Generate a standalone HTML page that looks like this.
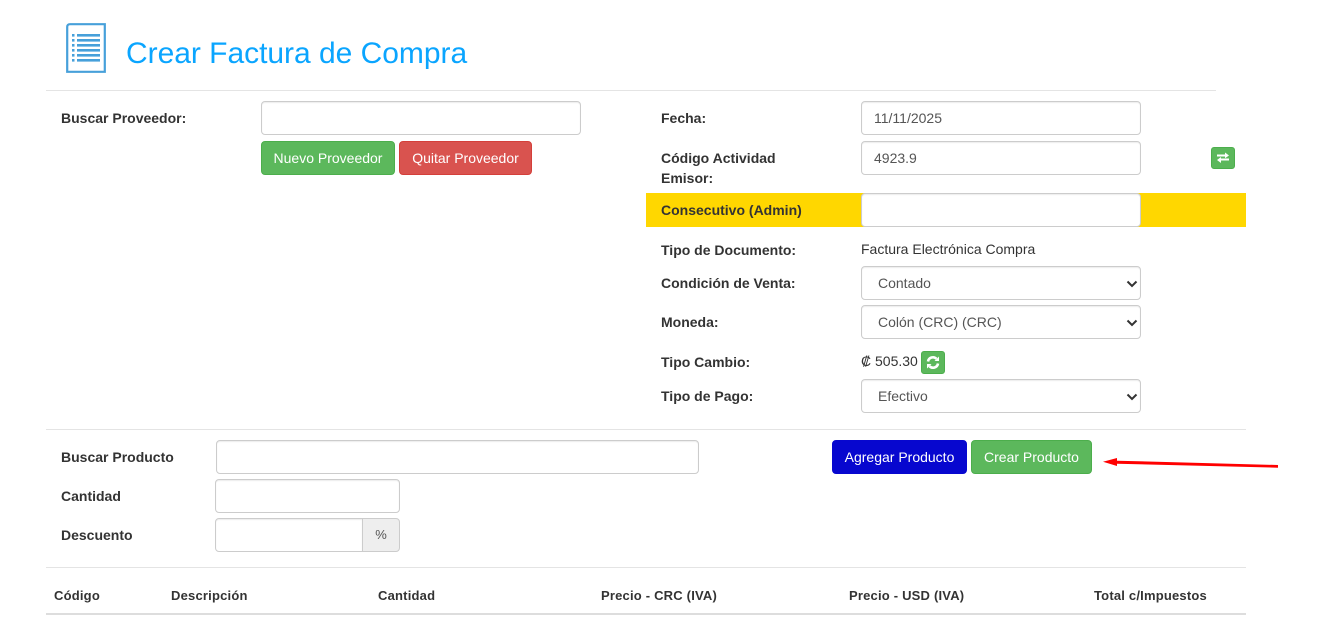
<!DOCTYPE html>
<html lang="es">
<head>
<meta charset="utf-8">
<title>Crear Factura de Compra</title>
<style>
html,body{margin:0;padding:0;background:#fff;}
body{width:1317px;height:644px;position:relative;overflow:hidden;font-family:"Liberation Sans",Arial,sans-serif;font-size:14px;line-height:20px;color:#333;}
.a{position:absolute;white-space:nowrap;}
.l{position:absolute;white-space:nowrap;font-weight:bold;height:20px;line-height:20px;}
.hr{position:absolute;height:1px;background:#e4e4e4;}
.i{position:absolute;box-sizing:border-box;height:34px;border:1px solid #ccc;border-radius:4px;background:#fff;color:#555;padding:6px 12px;line-height:20px;box-shadow:inset 0 1px 1px rgba(0,0,0,.075);white-space:nowrap;}
.s{position:absolute;box-sizing:border-box;height:34px;width:280px;left:861px;border:1px solid #ccc;border-radius:4px;background:#fff;color:#555;padding:6px 16px;line-height:20px;box-shadow:inset 0 1px 1px rgba(0,0,0,.075);white-space:nowrap;}
.s svg{position:absolute;right:1px;top:12px;}
.b{position:absolute;box-sizing:border-box;height:34px;border-radius:4px;color:#fff;text-align:center;line-height:32px;white-space:nowrap;}
.g{background:#5cb85c;border:1px solid #4cae4c;}
.r{background:#d9534f;border:1px solid #d43f3a;}
.th{position:absolute;top:587px;font-weight:bold;font-size:13px;line-height:18px;white-space:nowrap;letter-spacing:.2px;}
</style>
</head>
<body>
<svg class="a" style="left:66px;top:23px" width="40" height="50" viewBox="0 0 40 50">
<path d="M4 1.200H38.800V48.800H1.200V4Q1.200 1.200 4 1.200Z" fill="#fff" stroke="#47a0da" stroke-width="2.200"/>
<g fill="#47a0da">
<rect x="6" y="11" width="2.500" height="2.600"/><rect x="6" y="16" width="2.500" height="2.600"/><rect x="6" y="21" width="2.500" height="2.600"/><rect x="6" y="26" width="2.500" height="2.600"/><rect x="6" y="31" width="2.500" height="2.600"/><rect x="6" y="36" width="2.500" height="2.600"/>
<rect x="11" y="11" width="23" height="2.600"/><rect x="11" y="16" width="23" height="2.600"/><rect x="11" y="21" width="23" height="2.600"/><rect x="11" y="26" width="23" height="2.600"/><rect x="11" y="31" width="23" height="2.600"/><rect x="11" y="36" width="23" height="2.600"/>
</g>
</svg>
<div class="a" style="left:126px;top:36px;font-size:30px;line-height:36px;color:#0aa5ff;letter-spacing:-.03px;">Crear Factura de Compra</div>
<div class="hr" style="left:46px;top:90px;width:1170px;"></div>

<div class="l" style="left:61px;top:108px;">Buscar Proveedor:</div>
<div class="i" style="left:261px;top:101px;width:320px;"></div>
<div class="b g" style="left:261px;top:141px;width:134px;">Nuevo Proveedor</div>
<div class="b r" style="left:399px;top:141px;width:133px;">Quitar Proveedor</div>

<div class="l" style="left:661px;top:108px;">Fecha:</div>
<div class="i" style="left:861px;top:101px;width:280px;">11/11/2025</div>
<div class="l" style="left:661px;top:148px;">Código Actividad</div>
<div class="l" style="left:661px;top:168px;">Emisor:</div>
<div class="i" style="left:861px;top:141px;width:280px;">4923.9</div>
<div class="b g" style="left:1211px;top:147px;width:24px;height:22px;border-radius:3px;">
<svg style="position:absolute;left:4px;top:4px" width="14" height="12" viewBox="0 0 14 12"><path d="M1 2.500H9V0.500L13 3.500 9 6.200V4.500H1ZM13 6.500H5V5L1 8 5 11V8.500H13Z" fill="#fff"/></svg>
</div>

<div class="a" style="left:646px;top:193px;width:600px;height:34px;background:#ffd700;"></div>
<div class="l" style="left:661px;top:200px;">Consecutivo (Admin)</div>
<div class="i" style="left:861px;top:193px;width:280px;"></div>

<div class="l" style="left:661px;top:240px;">Tipo de Documento:</div>
<div class="a" style="left:861px;top:239px;">Factura Electrónica Compra</div>

<div class="l" style="left:661px;top:273px;">Condición de Venta:</div>
<div class="s" style="top:266px;">Contado<svg width="14" height="10" viewBox="0 0 14 10"><path d="M2.500 2.500L7 7 11.500 2.500" fill="none" stroke="#333" stroke-width="2"/></svg></div>
<div class="l" style="left:661px;top:312px;">Moneda:</div>
<div class="s" style="top:305px;">Colón (CRC) (CRC)<svg width="14" height="10" viewBox="0 0 14 10"><path d="M2.500 2.500L7 7 11.500 2.500" fill="none" stroke="#333" stroke-width="2"/></svg></div>

<div class="l" style="left:661px;top:352px;">Tipo Cambio:</div>
<div class="a" style="left:861px;top:351px;">₡ 505.30</div>
<div class="b g" style="left:921px;top:351px;width:24px;height:23px;border-radius:3px;">
<svg style="position:absolute;left:4px;top:3px" width="14" height="15" viewBox="0 0 14 15"><path d="M2 6.500A5 5 0 0 1 10.500 3.800M12 8.500A5 5 0 0 1 3.500 11.200" fill="none" stroke="#fff" stroke-width="2.600"/><path d="M8.500 6H13V1.500ZM5.500 9H1V13.500Z" fill="#fff"/></svg>
</div>

<div class="l" style="left:661px;top:386px;">Tipo de Pago:</div>
<div class="s" style="top:379px;">Efectivo<svg width="14" height="10" viewBox="0 0 14 10"><path d="M2.500 2.500L7 7 11.500 2.500" fill="none" stroke="#333" stroke-width="2"/></svg></div>

<div class="hr" style="left:46px;top:429px;width:1200px;"></div>

<div class="l" style="left:61px;top:447px;">Buscar Producto</div>
<div class="i" style="left:216px;top:440px;width:483px;"></div>
<div class="b" style="left:832px;top:440px;width:135px;background:#0707cf;border:1px solid #0707cf;">Agregar Producto</div>
<div class="b g" style="left:971px;top:440px;width:121px;">Crear Producto</div>
<svg class="a" style="left:1100px;top:455px" width="182" height="16" viewBox="0 0 182 16"><path d="M3 6.700L17 3V5.700L178 10V12.700L17 8.700V11Z" fill="#f00"/></svg>

<div class="l" style="left:61px;top:486px;">Cantidad</div>
<div class="i" style="left:215px;top:479px;width:185px;"></div>
<div class="l" style="left:61px;top:525px;">Descuento</div>
<div class="i" style="left:215px;top:518px;width:148px;border-radius:4px 0 0 4px;"></div>
<div class="i" style="left:362px;top:518px;width:38px;background:#eee;border-radius:0 4px 4px 0;text-align:center;padding:6px 0;box-shadow:none;font-size:13px;">%</div>

<div class="hr" style="left:46px;top:567px;width:1200px;"></div>
<div class="th" style="left:54px;">Código</div>
<div class="th" style="left:171px;">Descripción</div>
<div class="th" style="left:378px;">Cantidad</div>
<div class="th" style="left:601px;">Precio - CRC (IVA)</div>
<div class="th" style="left:849px;">Precio - USD (IVA)</div>
<div class="th" style="left:1094px;">Total c/Impuestos</div>
<div class="a" style="left:46px;top:613px;width:1200px;height:2px;background:#ddd;"></div>
</body>
</html>
